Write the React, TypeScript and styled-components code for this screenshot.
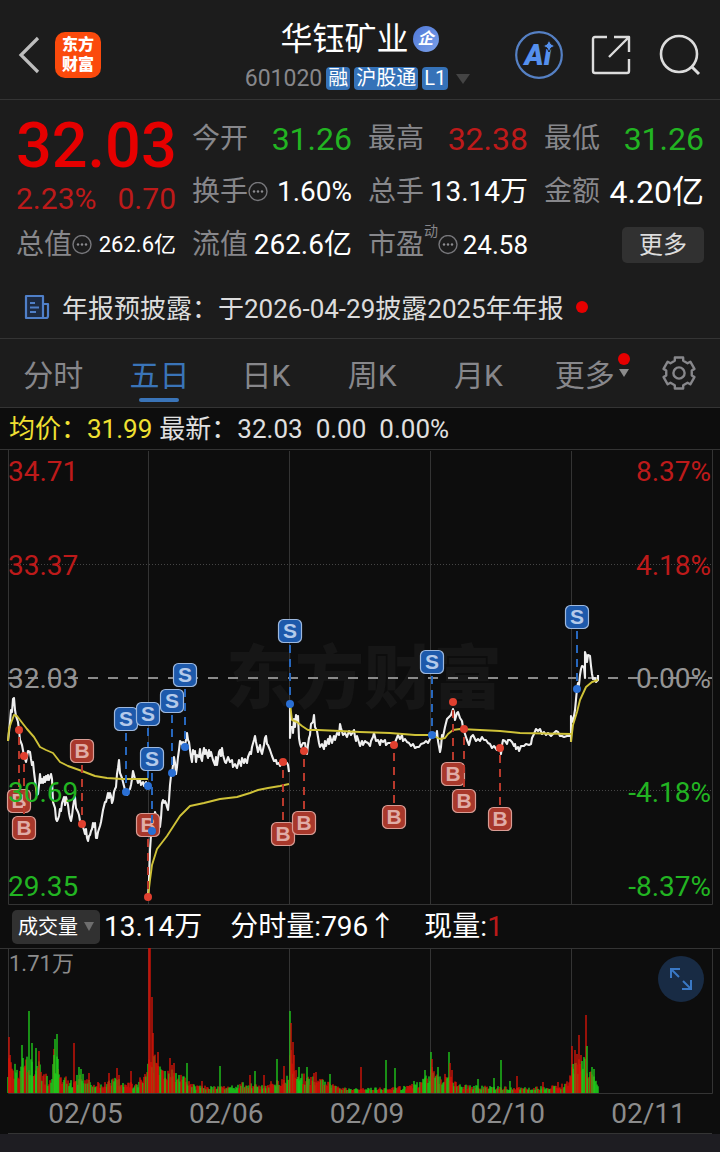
import { useState } from "react";
import styled, { createGlobalStyle } from "styled-components";

const RED = "#e60000";
const SOFT_RED = "#bd1a1a";
const GREEN = "#22b422";
const BLUE = "#3a74b8";
const GREY = "#87878b";
const LINE = "#343434";

const GlobalStyle = createGlobalStyle`
  * {
    box-sizing: border-box;
  }

  body {
    margin: 0;
    background: #1e1d22;
    color: #ffffff;
    font-family: Roboto, "Noto Sans CJK SC", sans-serif;
  }

  button, select {
    font-family: inherit;
    border: none;
    cursor: pointer;
  }

  svg {
    display: block;
    flex-shrink: 0;
  }
`;

const Page = styled.div`
  background: #1c1c1c;
`;

const Header = styled.header`
  display: grid;
  grid-template-columns: 1fr auto 1fr;
  align-items: center;
  height: 100px;
  padding: 10px 19px 0 18px;
  border-bottom: 1px solid ${LINE};
`;

const HeaderSide = styled.div<{ $end?: boolean }>`
  display: flex;
  align-items: center;
  justify-content: ${(props) => (props.$end ? "flex-end" : "flex-start")};
  gap: ${(props) => (props.$end ? "28px" : "14px")};
`;

const IconButton = styled.button`
  display: flex;
  padding: 0;
  background: none;
`;

const Logo = styled.a`
  display: flex;
  align-items: center;
  justify-content: center;
  width: 46px;
  height: 46px;
  border-radius: 10px;
  background: #fb4a0c;
  color: #ffffff;
  font-size: 16px;
  font-weight: 900;
  line-height: 20px;
  text-decoration: none;
`;

const TitleBlock = styled.div`
  display: flex;
  flex-direction: column;
  align-items: center;
  gap: 4px;
  padding-top: 4px;
`;

const StockName = styled.h1`
  display: flex;
  align-items: center;
  gap: 4px;
  margin: 0;
  font-size: 32px;
  font-weight: 400;
  line-height: 40px;
`;

const CompanyBadge = styled.span`
  width: 26px;
  height: 26px;
  border-radius: 50%;
  background: linear-gradient(135deg, #4f78d8, #7ba0e8);
  font-size: 16px;
  font-weight: 700;
  font-style: italic;
  line-height: 25px;
  text-align: center;
`;

const StockCode = styled.div`
  display: flex;
  align-items: center;
  gap: 4px;
  height: 32px;
  color: ${GREY};
  font-size: 23px;
`;

const Tag = styled.span`
  height: 23px;
  padding: 0 2px;
  border-radius: 4px;
  background: #3572b8;
  color: #ffffff;
  font-size: 20px;
  line-height: 23px;
`;

const Quotes = styled.section`
  display: grid;
  grid-template-columns: repeat(4, minmax(0, 1fr));
  grid-auto-rows: 53px;
  column-gap: 16px;
  padding: 12px 16px 8px;
`;

const PriceBlock = styled.div`
  grid-row: span 2;
`;

const Price = styled.div`
  color: ${RED};
  font-size: 63px;
  font-weight: 500;
  line-height: 68px;
`;

const Change = styled.div`
  display: flex;
  justify-content: space-between;
  color: ${SOFT_RED};
  font-size: 30px;
  line-height: 38px;
`;

const Cell = styled.div`
  display: flex;
  align-items: center;
  justify-content: space-between;
  white-space: nowrap;
`;

const CellLabel = styled.span`
  display: flex;
  align-items: center;
  color: ${GREY};
  font-size: 28px;
  line-height: 36px;
`;

const Sup = styled.sup`
  align-self: flex-start;
  font-size: 14px;
  line-height: 8px;
`;

const CellValue = styled.span<{ $size: number; $color?: string }>`
  color: ${(props) => props.$color || "#ffffff"};
  font-size: ${(props) => props.$size}px;
  line-height: 36px;
`;

const MoreButton = styled.button`
  width: 82px;
  height: 36px;
  margin-left: auto;
  padding: 0;
  border-radius: 5px;
  background: #313131;
  color: #dddddd;
  font-size: 24px;
  line-height: 36px;
`;

const Notice = styled.a`
  display: flex;
  align-items: center;
  gap: 12px;
  height: 60px;
  padding: 0 24px 4px;
  border-bottom: 1px solid ${LINE};
  color: #dcdcdc;
  font-size: 26px;
  text-decoration: none;
  white-space: nowrap;
`;

const Dot = styled.i`
  width: 12px;
  height: 12px;
  border-radius: 50%;
  background: ${RED};
`;

const Tabs = styled.nav`
  display: flex;
  height: 69px;
  border-bottom: 1px solid ${LINE};
`;

const Tab = styled.button<{ $active: boolean }>`
  position: relative;
  flex: 1;
  padding: 0;
  background: none;
  color: ${(props) => (props.$active ? BLUE : GREY)};
  font-size: 30px;

  &::after {
    content: "";
    display: ${(props) => (props.$active ? "block" : "none")};
    position: absolute;
    bottom: 5px;
    left: 50%;
    width: 40px;
    height: 4px;
    margin-left: -20px;
    border-radius: 2px;
    background: ${BLUE};
  }
`;

const TabBadge = styled.span`
  position: absolute;
  top: 14px;
  right: 8px;
  display: flex;
  flex-direction: column;
  align-items: center;
  gap: 4px;
`;

const SettingsButton = styled.button`
  display: flex;
  align-items: center;
  justify-content: center;
  width: 82px;
  padding: 0;
  background: none;
`;

const ChartArea = styled.main`
  background: #0d0d0d;
`;

const AverageRow = styled.div`
  display: flex;
  align-items: baseline;
  gap: 13px;
  height: 41px;
  padding: 0 9px;
  color: #e0e0e0;
  font-size: 26px;
  line-height: 42px;
`;

const Average = styled.span`
  margin-right: -6px;
  color: #f0e032;
`;

const VolumeRow = styled.div`
  display: flex;
  align-items: center;
  height: 43px;
  padding: 0 12px;
  font-size: 28px;
  line-height: 40px;
  white-space: nowrap;
`;

const SelectBox = styled.label`
  display: flex;
  align-items: center;
  width: 88px;
  height: 34px;
  padding: 0 6px;
  border-radius: 5px;
  background: #313131;
`;

const Select = styled.select`
  appearance: none;
  width: 66px;
  padding: 0;
  background: transparent;
  color: #ffffff;
  font-size: 20px;
  line-height: 32px;
  outline: none;
`;

const VolumeItem = styled.span<{ $gap: number }>`
  margin-left: ${(props) => props.$gap}px;
`;

const Up = styled.span`
  color: ${SOFT_RED};
`;

const VolumeChart = styled.div`
  position: relative;
`;

const ExpandButton = styled.button`
  position: absolute;
  top: 8px;
  right: 16px;
  display: flex;
  align-items: center;
  justify-content: center;
  width: 46px;
  height: 46px;
  padding: 0;
  border-radius: 50%;
  background: #182b44;
`;

const Dates = styled.div`
  display: grid;
  grid-template-columns: repeat(5, 1fr);
  align-items: center;
  height: 40px;
  margin: 0 8px;
  border-bottom: 1px solid ${LINE};
  color: #8c8c8c;
  font-size: 28px;
  text-align: center;

  span {
    padding-left: 14px;
  }
`;

const Footer = styled.footer`
  height: 18px;
  background: #1e1d22;
`;

// one polyline per trading day
const PRICE = [
  "8,741 9,732 10,722 11,710 12,712 13,699 14,698 15,710 16,716 18,722 19,730 20,740 22,745 24,756 26,762 27,757 28,751 30,752 31,759 32,765 33,762 34,772 35,780 37,795 38,794 39,785 40,774 41,783 42,779 43,783 44,777 45,782 46,776 47,780 48,775 49,780 51,774 52,779 53,802 55,808 56,819 57,821 58,819 59,816 60,809 61,811 62,803 64,797 65,805 66,797 68,805 69,813 70,818 71,821 72,816 73,807 74,801 75,797 76,808 78,812 79,815 80,821 82,824 84,830 85,834 86,829 87,838 88,841 89,836 90,835 91,831 92,829 93,823 94,827 95,823 96,838 97,838 98,832 100,826 101,822 102,816 103,810 105,802 106,802 108,793 109,798 110,793 111,796 112,803 113,800 114,792 115,789 116,787 117,774 118,768 119,760 120,773 122,778 123,782 124,786 125,790 127,795 128,791 130,789 131,785 132,779 133,771 134,775 135,779 137,779 138,783 140,780 141,785 143,782 144,786 146,782 147,786 148,785",
  "148,897 149,880 150,850 151,835 152,830 153,827 154,822 155,812 156,815 157,818 158,822 160,827 161,818 162,803 163,800 164,803 165,801 166,803 167,807 168,810 169,800 170,785 171,776 172,773 173,765 174,757 175,763 176,774 177,767 178,757 179,750 180,741 181,742 182,745 183,742 185,745 186,740 187,733 188,740 189,742 190,750 191,757 192,762 193,750 194,754 195,751 196,762 197,755 199,757 200,749 201,758 202,761 203,753 204,748 205,754 206,750 208,758 209,750 210,756 211,752 213,760 215,765 216,757 217,765 219,752 220,750 221,756 222,748 223,755 225,762 226,763 228,757 230,762 232,760 233,767 235,764 237,768 239,760 241,766 242,758 244,763 245,759 247,763 248,757 250,752 251,754 252,747 254,740 255,736 256,742 258,752 260,745 261,751 262,754 264,745 265,738 266,736 267,744 268,745 270,750 272,756 274,761 276,760 277,764 279,763 280,766 282,762 285,762 287,763 288,765 289,772",
  "290,703 290,738 291,727 293,727 293,733 294,719 295,727 296,715 297,722 298,716 299,738 300,744 301,747 303,743 305,743 306,750 307,754 308,745 309,738 310,735 311,724 313,722 314,715 315,727 317,731 318,737 319,743 320,747 322,744 324,749 325,741 326,746 328,739 329,744 330,736 332,743 334,736 335,740 337,733 339,735 340,724 341,728 343,735 345,733 347,737 349,731 351,735 353,732 354,730 355,737 356,741 357,736 358,739 360,746 362,741 363,745 365,741 366,742 368,743 370,746 371,741 373,737 374,733 376,741 378,740 380,745 381,740 383,742 385,740 386,745 388,743 390,743 392,743 394,745 396,740 398,735 400,739 402,735 403,741 405,739 407,742 409,743 411,746 413,744 415,748 417,747 419,747 421,744 424,743 426,741 428,743 430,739 432,737",
  "432,737 434,733 436,736 437,731 438,741 440,752 441,747 442,735 443,737 445,727 447,719 449,717 451,715 453,709 454,712 455,720 457,713 458,712 460,718 462,721 463,728 465,734 467,740 469,745 471,737 473,735 475,739 476,741 478,739 480,741 482,737 484,740 486,740 488,743 490,744 492,748 494,746 497,750 500,747 501,754 502,745 503,740 505,741 507,744 508,740 510,740 512,742 514,746 515,744 516,749 518,747 519,751 521,746 524,746 526,744 529,745 531,744 532,738 534,734 536,729 538,731 540,729 542,734 544,732 546,735 548,733 551,736 553,734 556,731 558,732 560,736 562,736 564,737 567,736 571,736",
  "571,742 571,716 573,722 575,710 577,689 578,683 579,685 580,675 581,669 582,666 584,667 585,678 585,652 586,655 587,662 588,655 590,656 591,666 592,674 593,679 595,678 596,682 598,680 598,675",
];

const AVERAGE = [
  "8,741 9,729 11,723 14,715 17,716 20,720 27,729 34,737 40,747 46,750 53,753 60,762 68,766 82,771 95,776 107,778 122,779 148,779",
  "148,897 150,880 152,865 157,849 167,836 180,816 190,806 204,803 220,799 237,797 250,793 258,790 268,788 280,786 289,784",
  "290,703 292,720 297,722 302,726 308,730 318,730 340,731 360,732 390,733 415,735 432,735",
  "432,735 436,737 440,739 445,738 448,734 453,730 460,729 480,730 500,731 520,733 571,734",
  "571,742 573,725 577,712 580,700 586,687 592,682 598,680",
];

// side, x, centre of the label, price point it hangs on
type Trade = ["B" | "S", number, number, number];

const TRADES: Trade[] = [
  ["B", 19, 801, 730],
  ["B", 24, 828, 756],
  ["B", 82, 751, 824],
  ["B", 148, 825, 897],
  ["B", 283, 834, 762],
  ["B", 304, 823, 751],
  ["B", 394, 817, 745],
  ["B", 453, 774, 702],
  ["B", 464, 801, 729],
  ["B", 500, 819, 748],
  ["S", 126, 719, 792],
  ["S", 148, 714, 786],
  ["S", 152, 759, 831],
  ["S", 172, 701, 773],
  ["S", 185, 675, 747],
  ["S", 290, 631, 704],
  ["S", 432, 662, 735],
  ["S", 577, 617, 689],
];

const AXIS = [
  { price: "34.71", pct: "8.37%", y: 481, color: SOFT_RED },
  { price: "33.37", pct: "4.18%", y: 575, color: SOFT_RED },
  { price: "32.03", pct: "0.00%", y: 688, color: "#949494" },
  { price: "30.69", pct: "-4.18%", y: 802, color: GREEN },
  { price: "29.35", pct: "-8.37%", y: 896, color: GREEN },
];

const DAY_LINES = [148.5, 289.5, 430.5, 571.5];

// usual bar height along the x axis
const ENVELOPE = [
  [8, 40], [14, 30], [20, 35], [27, 40], [38, 40], [42, 26], [48, 16], [52, 14], [54, 45], [58, 50],
  [59, 20], [66, 20], [72, 12], [80, 22], [88, 18], [94, 11], [105, 12], [116, 18], [120, 14], [126, 10],
  [137, 12], [145, 22], [149, 60], [153, 45], [158, 30], [165, 20], [170, 28], [178, 22], [188, 16],
  [195, 8], [225, 7], [235, 8], [245, 12], [260, 8], [270, 12], [280, 14], [288, 20], [291, 55],
  [295, 24], [303, 20], [312, 18], [325, 13], [335, 8], [350, 5], [395, 6], [415, 10], [425, 16],
  [432, 32], [440, 18], [447, 24], [452, 16], [458, 9], [480, 8], [520, 6], [560, 8], [568, 14],
  [572, 26], [578, 36], [585, 38], [590, 22], [595, 20], [599, 8],
];

type Spike = [number, number, "r" | "g"];

const SPIKES: Spike[] = [
  [9, 56, "r"], [10, 38, "r"], [22, 48, "g"], [23, 35, "g"], [29, 82, "g"], [32, 50, "g"], [36, 45, "g"],
  [39, 42, "r"], [54, 38, "g"], [55, 54, "g"], [57, 59, "g"], [58, 34, "g"], [74, 50, "r"], [79, 26, "g"], [81, 24, "g"],
  [89, 20, "r"], [109, 20, "r"], [117, 25, "r"], [119, 18, "r"], [131, 22, "r"], [149, 145, "r"], [150, 145, "r"],
  [152, 96, "r"], [153, 60, "r"], [158, 41, "r"], [165, 22, "g"], [170, 35, "r"], [172, 28, "r"], [174, 30, "r"],
  [187, 30, "g"], [202, 12, "r"], [220, 27, "g"], [255, 22, "g"], [250, 18, "r"], [264, 18, "r"],
  [277, 34, "g"], [284, 27, "r"], [290, 82, "g"], [291, 70, "r"], [293, 51, "r"], [294, 38, "r"],
  [299, 26, "g"], [307, 26, "g"], [314, 20, "r"], [316, 21, "r"], [330, 19, "g"], [361, 26, "r"],
  [386, 33, "g"], [395, 25, "g"], [414, 12, "g"], [425, 23, "g"], [431, 41, "g"], [432, 34, "r"],
  [438, 26, "g"], [449, 41, "g"], [450, 30, "r"], [452, 23, "r"], [478, 14, "g"], [494, 15, "g"],
  [501, 33, "g"], [510, 12, "g"], [517, 17, "r"], [543, 11, "r"], [558, 11, "r"], [572, 47, "r"],
  [573, 29, "g"], [575, 43, "r"], [577, 39, "r"], [579, 58, "r"], [581, 38, "r"], [582, 32, "g"],
  [586, 78, "r"], [587, 47, "g"], [592, 26, "g"], [594, 24, "g"],
];

const envelopeAt = (x: number) => {
  const i = ENVELOPE.findIndex((p) => p[0] > x);
  if (i < 1) return ENVELOPE[0][1];
  const [x0, h0] = ENVELOPE[i - 1];
  const [x1, h1] = ENVELOPE[i];
  return h0 + ((h1 - h0) * (x - x0)) / (x1 - x0);
};

const buildBars = () => {
  const bars: Spike[] = [];
  let seed = 17;
  const next = () => {
    seed = (seed * 16807) % 2147483647;
    return seed / 2147483647;
  };
  for (let x = 8; x < 599; x += 1) {
    const max = envelopeAt(x);
    bars.push([x, Math.max(3, max * (0.4 + 0.6 * next())), next() > 0.46 ? "r" : "g"]);
  }
  return bars.concat(SPIKES);
};

const BARS = buildBars();

const gearPoints = () => {
  const points: string[] = [];
  for (let k = 0; k < 6; k++) {
    [[-15, 16], [15, 16], [19, 13], [41, 13]].forEach(([deg, r]) => {
      const a = ((deg - 90 + k * 60) * Math.PI) / 180;
      points.push(`${(18 + r * Math.cos(a)).toFixed(2)},${(18 + r * Math.sin(a)).toFixed(2)}`);
    });
  }
  return points.join(" ");
};

const InfoIcon = () => (
  <svg width="20" height="20" viewBox="0 0 20 20" fill="none" stroke="#77777b">
    <circle cx="10" cy="9.5" r="9" strokeWidth="1.4" />
    <g fill="#8c8c90" stroke="none">
      <circle cx="6" cy="9.5" r="1.2" />
      <circle cx="10" cy="9.5" r="1.2" />
      <circle cx="14" cy="9.5" r="1.2" />
    </g>
  </svg>
);

const PriceChart = () => (
  <svg width="100%" viewBox="0 449 720 456" fontFamily='Roboto, "Noto Sans CJK SC", sans-serif'>
    <text x="364" y="703" fontSize="69" fontWeight="900" fill="#161616" textAnchor="middle">
      东方财富
    </text>
    <g stroke={LINE} fill="none">
      <path d="M0 449.5H720M8.5 450V904.5H712.5V450" />
      {DAY_LINES.map((x) => (
        <path key={x} d={`M${x} 451V904`} />
      ))}
      <path d="M8 564.5H712M8 790.5H712" strokeDasharray="1 2" stroke="#454545" />
    </g>
    <path d="M8 678H712" stroke="#8a8a8a" strokeWidth="1.8" strokeDasharray="10 10" />
    <g fill="none" strokeLinejoin="round">
      {PRICE.map((points) => (
        <polyline key={points} points={points} stroke="#efefef" strokeWidth="2.1" />
      ))}
      {AVERAGE.map((points) => (
        <polyline key={points} points={points} stroke="#cfc238" strokeWidth="1.9" />
      ))}
    </g>
    <circle cx="155" cy="821" r="5" fill="#e0402f" opacity="0.85" />
    {TRADES.map(([side, x, y, at]) => {
      const buy = side === "B";
      return (
        <g key={`${x}-${y}`}>
          <path
            d={`M${x} ${y}V${at}`}
            stroke={buy ? "#b8392c" : "#2767bd"}
            strokeWidth="2"
            strokeDasharray="8 6"
          />
          <circle cx={x} cy={at} r="4" fill={buy ? "#e0402f" : "#2a6fd4"} />
          <rect
            x={x - 11.5}
            y={y - 11.5}
            width="23"
            height="23"
            rx="5"
            fill={buy ? "#a8382b" : "#1d59ab"}
            stroke={buy ? "#d89c94" : "#9db8de"}
            strokeWidth="1.2"
          />
          <text
            x={x}
            y={y + 7}
            fontSize="21"
            fontWeight="700"
            fontFamily='"Liberation Sans", sans-serif'
            fill={buy ? "#e0aca6" : "#b4caea"}
            textAnchor="middle"
          >
            {side}
          </text>
        </g>
      );
    })}
    {AXIS.map((row) => (
      <g key={row.price} fontSize="28" fill={row.color}>
        <text x="8" y={row.y}>{row.price}</text>
        <text x="711" y={row.y} textAnchor="end">{row.pct}</text>
      </g>
    ))}
  </svg>
);

const TABS = ["分时", "五日", "日K", "周K", "月K", "更多"];

const App = () => {
  const [tab, setTab] = useState("五日");

  return (
    <Page>
      <GlobalStyle />
      <Header>
        <HeaderSide>
          <IconButton aria-label="返回">
            <svg width="23" height="40" viewBox="0 0 23 40" fill="none" stroke="#bdbdbd" strokeWidth="3.2">
              <path d="M20 3L3 20L20 37" />
            </svg>
          </IconButton>
          <Logo href="#">
            <span>东方<br />财富</span>
          </Logo>
        </HeaderSide>
        <TitleBlock>
          <StockName>
            华钰矿业<CompanyBadge>企</CompanyBadge>
          </StockName>
          <StockCode>
            601020
            <Tag>融</Tag>
            <Tag>沪股通</Tag>
            <Tag>L1</Tag>
            <svg width="22" height="12" viewBox="0 0 22 12">
              <path d="M4 1H18L11 11Z" fill="#444444" />
            </svg>
          </StockCode>
        </TitleBlock>
        <HeaderSide $end>
          <IconButton aria-label="AI">
            <svg width="48" height="48" viewBox="0 0 48 48">
              <circle cx="24" cy="24" r="22.8" fill="none" stroke="#5580c4" strokeWidth="2.2" />
              <text x="23" y="34" fontSize="29" fontWeight="900" fontStyle="italic" fontFamily="Roboto, sans-serif" fill="#5590ee" textAnchor="middle">
                Ai
              </text>
              <path d="M34 9L36 13L40 15L36 17L34 21L32 17L28 15L32 13Z" fill="#5590ee" stroke="#1c1c1c" strokeWidth="1" />
            </svg>
          </IconButton>
          <IconButton aria-label="分享">
            <svg width="40" height="40" viewBox="0 0 40 40" fill="none" stroke="#dcdcdc" strokeWidth="2.4" strokeLinejoin="round">
              <path d="M16 2H4Q2 2 2 4V36Q2 38 4 38H36Q38 38 38 36V24" />
              <path d="M23 2H38V17M38 2L18 22" />
            </svg>
          </IconButton>
          <IconButton aria-label="搜索">
            <svg width="42" height="42" viewBox="0 0 42 42" fill="none" stroke="#dcdcdc" strokeWidth="2.6">
              <circle cx="20" cy="20" r="18" />
              <path d="M33 33L40 40" strokeWidth="3" />
            </svg>
          </IconButton>
        </HeaderSide>
      </Header>

      <Quotes>
        <PriceBlock>
          <Price>32.03</Price>
          <Change>
            <span>2.23%</span>
            <span>0.70</span>
          </Change>
        </PriceBlock>
        <Cell>
          <CellLabel>今开</CellLabel>
          <CellValue $size={32} $color={GREEN}>31.26</CellValue>
        </Cell>
        <Cell>
          <CellLabel>最高</CellLabel>
          <CellValue $size={32} $color={SOFT_RED}>32.38</CellValue>
        </Cell>
        <Cell>
          <CellLabel>最低</CellLabel>
          <CellValue $size={32} $color={GREEN}>31.26</CellValue>
        </Cell>
        <Cell>
          <CellLabel>换手<InfoIcon /></CellLabel>
          <CellValue $size={28}>1.60%</CellValue>
        </Cell>
        <Cell>
          <CellLabel>总手</CellLabel>
          <CellValue $size={28}>13.14万</CellValue>
        </Cell>
        <Cell>
          <CellLabel>金额</CellLabel>
          <CellValue $size={32}>4.20亿</CellValue>
        </Cell>
        <Cell>
          <CellLabel>总值<InfoIcon /></CellLabel>
          <CellValue $size={22}>262.6亿</CellValue>
        </Cell>
        <Cell>
          <CellLabel>流值</CellLabel>
          <CellValue $size={28}>262.6亿</CellValue>
        </Cell>
        <Cell>
          <CellLabel>市盈<Sup>动</Sup><InfoIcon /></CellLabel>
          <CellValue $size={26}>24.58</CellValue>
        </Cell>
        <Cell>
          <MoreButton>更多</MoreButton>
        </Cell>
      </Quotes>

      <Notice href="#">
        <svg width="26" height="26" viewBox="0 0 26 26" fill="none" stroke="#4f7fc8" strokeWidth="2.2" strokeLinejoin="round">
          <path d="M2 2H19V24H2Z" fill="#1c2a42" />
          <path d="M19 10H24V22Q24 24 22 24H19" />
          <path d="M6 9H11M6 13.5H15M6 18H12" strokeWidth="1.8" />
        </svg>
        年报预披露：于2026-04-29披露2025年年报
        <Dot />
      </Notice>

      <Tabs>
        {TABS.map((name) => (
          <Tab key={name} $active={name === tab} onClick={() => setTab(name)}>
            {name}
            {name === "更多" && (
              <TabBadge>
                <Dot />
                <svg width="10" height="8" viewBox="0 0 10 8">
                  <path d="M0 0H10L5 8Z" fill="#8c8c8c" />
                </svg>
              </TabBadge>
            )}
          </Tab>
        ))}
        <SettingsButton aria-label="设置">
          <svg width="36" height="36" viewBox="0 0 36 36" fill="none" stroke="#87878b" strokeWidth="2.4" strokeLinejoin="round">
            <polygon points={gearPoints()} />
            <circle cx="18" cy="18" r="5.6" />
          </svg>
        </SettingsButton>
      </Tabs>

      <ChartArea>
        <AverageRow>
          <Average>均价：31.99</Average>
          <span>最新：32.03</span>
          <span>0.00</span>
          <span>0.00%</span>
        </AverageRow>
        <PriceChart />
        <VolumeRow>
          <SelectBox>
            <Select aria-label="指标">
              <option>成交量</option>
            </Select>
            <svg width="10" height="9" viewBox="0 0 10 9">
              <path d="M0 0H10L5 9Z" fill="#6e6e6e" />
            </svg>
          </SelectBox>
          <VolumeItem $gap={4}>13.14万</VolumeItem>
          <VolumeItem $gap={28}>分时量:796↑</VolumeItem>
          <VolumeItem $gap={28}>
            现量:<Up>1</Up>
          </VolumeItem>
        </VolumeRow>
        <VolumeChart>
          <svg width="100%" viewBox="0 948 720 146" fontFamily='Roboto, "Noto Sans CJK SC", sans-serif'>
            <g stroke={LINE} fill="none">
              <path d="M0 948.5H720M8.5 948V1093.5H712.5V948" />
              {DAY_LINES.map((x) => (
                <path key={x} d={`M${x} 949V1093`} />
              ))}
            </g>
            <text x="9" y="971" fontSize="22" fill="#8c8c8c">1.71万</text>
            {BARS.map(([x, h, c], i) => (
              <rect
                key={i}
                x={x - 0.9}
                y={1093 - h}
                width="1.8"
                height={h}
                fill={c === "r" ? "#d81408" : "#20cc1c"}
                opacity="0.76"
              />
            ))}
          </svg>
          <ExpandButton aria-label="全屏">
            <svg width="24" height="24" viewBox="0 0 24 24" fill="none" stroke="#3a78c4" strokeWidth="2">
              <path d="M2 11V2H11M2 2L10 10M22 13V22H13M22 22L14 14" />
            </svg>
          </ExpandButton>
        </VolumeChart>
        <Dates>
          <span>02/05</span>
          <span>02/06</span>
          <span>02/09</span>
          <span>02/10</span>
          <span>02/11</span>
        </Dates>
      </ChartArea>
      <Footer />
    </Page>
  );
};

export default App;
